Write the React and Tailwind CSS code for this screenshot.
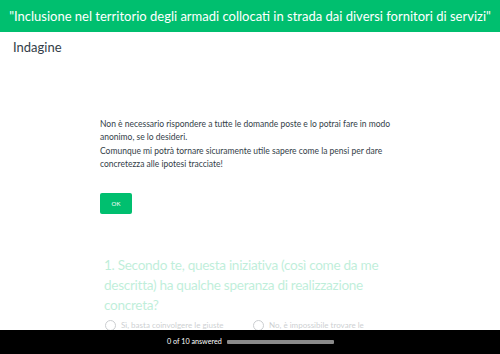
export default function App() {
  return (
    <div className="relative w-[500px] h-[354px] overflow-hidden bg-white" style={{ fontFamily: 'Lato, "Liberation Sans", sans-serif' }}>
      <div className="h-[32px] bg-[#00bf6f] flex items-center justify-center">
        <div className="text-white text-[13px] leading-none whitespace-nowrap">"Inclusione nel territorio degli armadi collocati in strada dai diversi fornitori di servizi"</div>
      </div>
      <div className="pl-[13px] pt-[7px] text-[#333e48] text-[13px] leading-[16px]">Indagine</div>
      <div className="pl-[100px] pt-[63px]">
        <div className="text-[#333e48] text-[8.5px] leading-[13.3px] w-[305px]">
          <p>Non è necessario rispondere a tutte le domande poste e lo potrai fare in modo anonimo, se lo desideri.</p>
          <p>Comunque mi potrà tornare sicuramente utile sapere come la pensi per dare concretezza alle ipotesi tracciate!</p>
        </div>
        <div className="mt-[22px] w-[32px] h-[21px] bg-[#00bf6f] rounded-[2px] flex items-center justify-center text-white text-[6px]">OK</div>
        <div className="mt-[41px] pl-[4px] w-[285px] text-[#00bf6f] opacity-25 text-[13.6px] tracking-[-0.3px] leading-[20px]">1. Secondo te, questa iniziativa (così come da me descritta) ha qualche speranza di realizzazione concreta?</div>
        <div className="mt-[4px] pl-[5px] flex items-center opacity-25 text-[#333e48] text-[8px]">
          <div className="w-[11px] h-[11px] rounded-full border border-[#333e48]"></div>
          <span className="ml-[5px] w-[132px]">Sì, basta coinvolgere le giuste</span>
          <div className="w-[11px] h-[11px] rounded-full border border-[#333e48]"></div>
          <span className="ml-[5px]">No, è impossibile trovare le</span>
        </div>
      </div>
      <div className="absolute left-0 bottom-0 w-full h-[24px] bg-black flex items-center pl-[167px]">
        <span className="text-white text-[7.2px] w-[60px] whitespace-nowrap">0 of 10 answered</span>
        <div className="w-[107px] h-[4px] bg-[#8a8a8a] rounded-[1px]"></div>
      </div>
    </div>
  );
}
